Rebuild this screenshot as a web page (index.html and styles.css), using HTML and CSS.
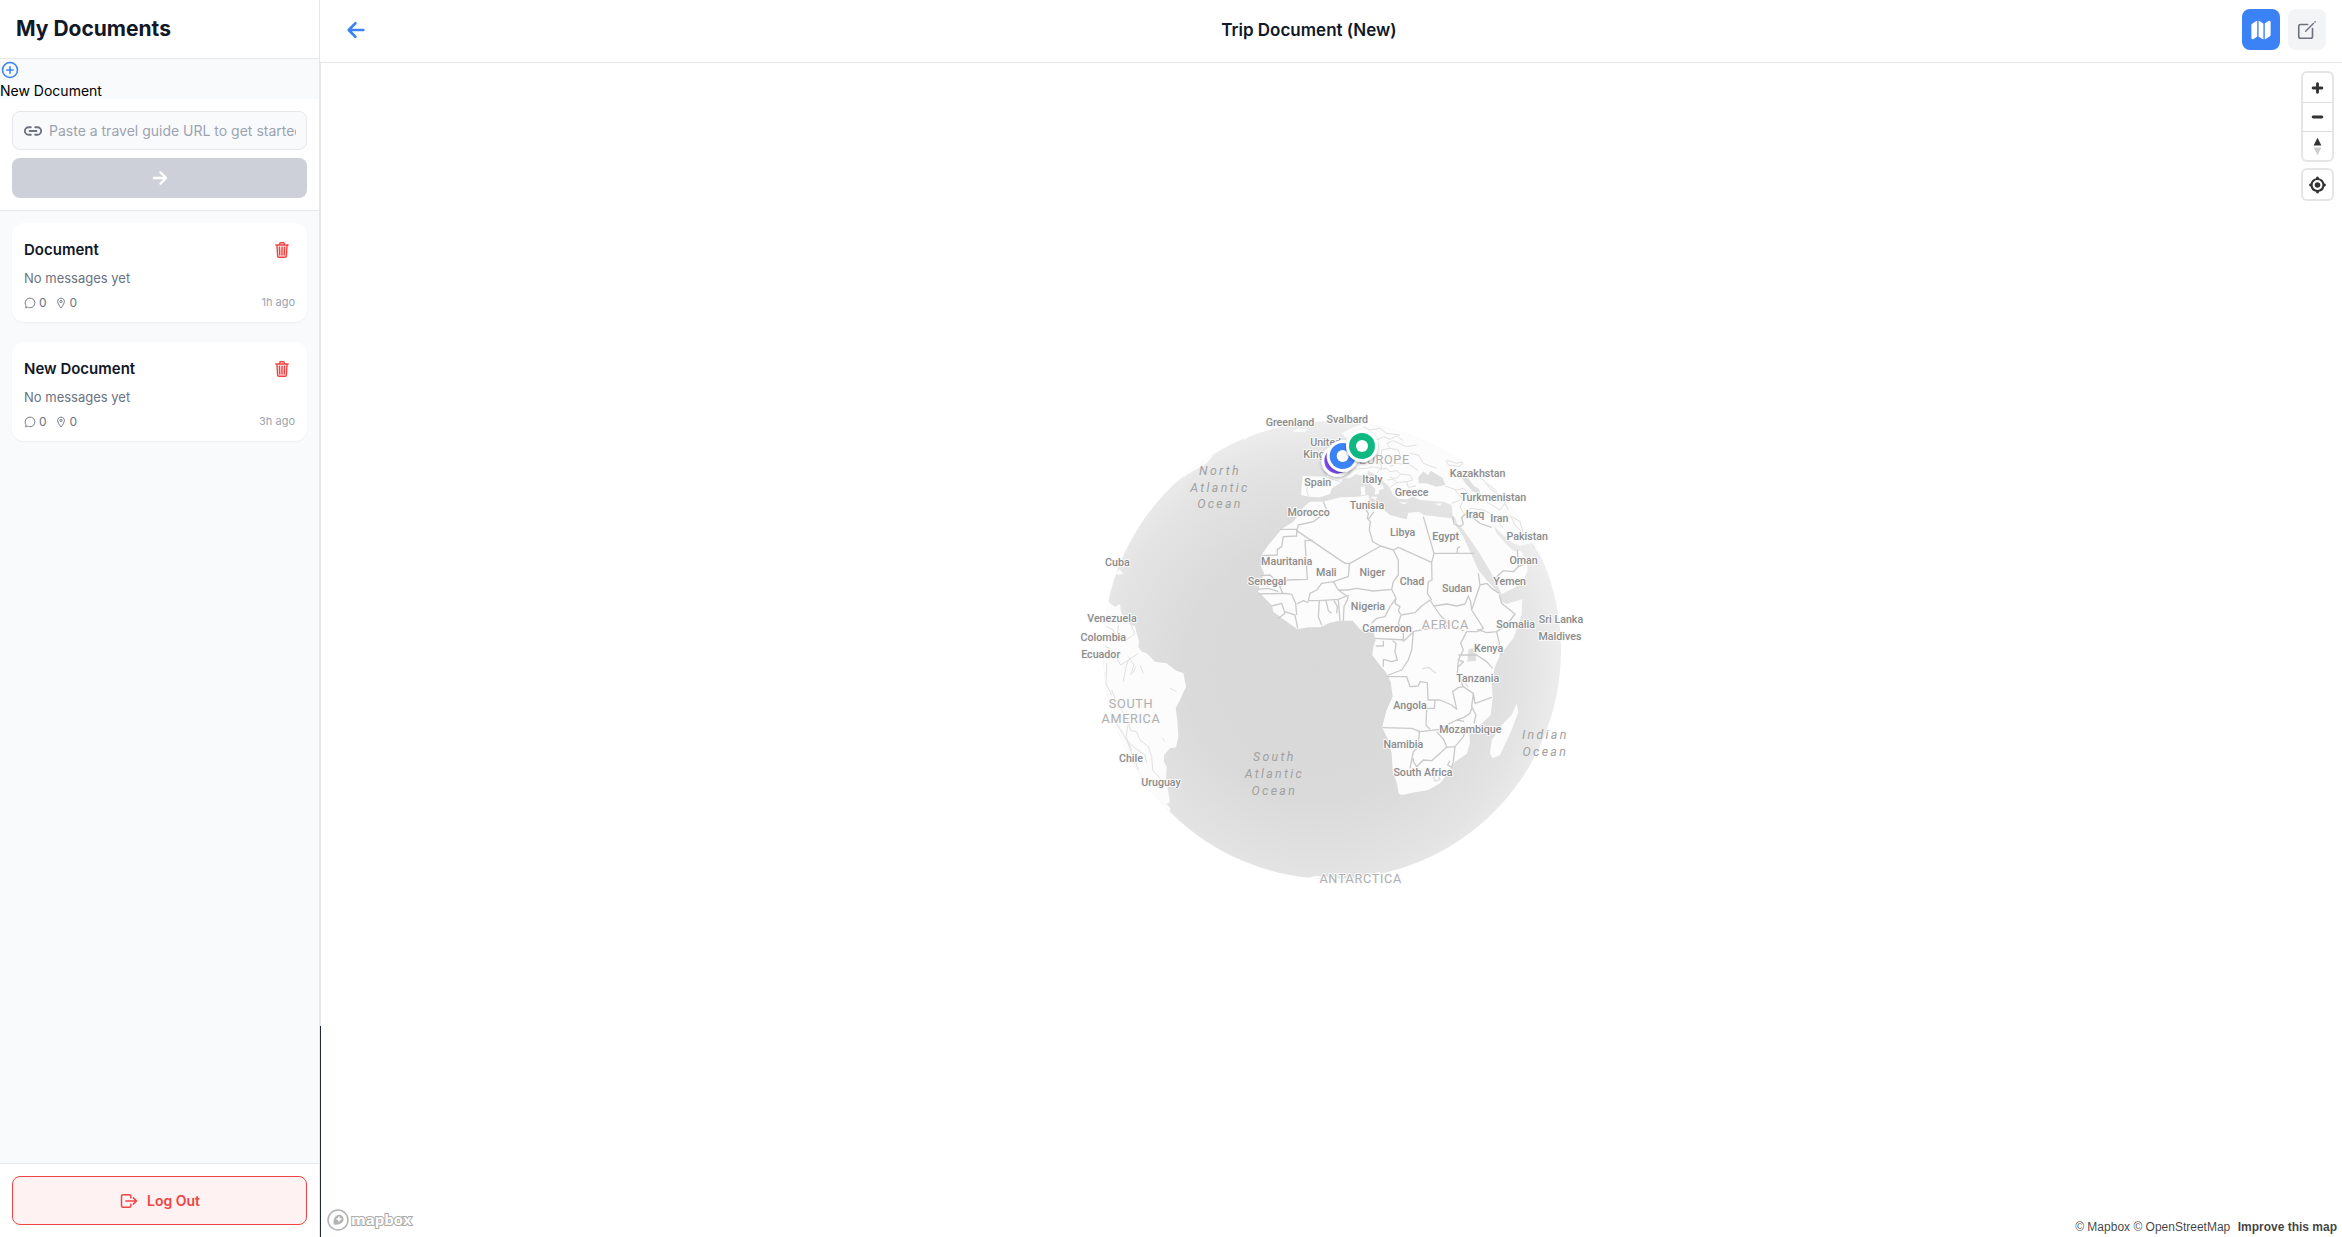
FILE: index.html
```html
<!DOCTYPE html>
<html lang="en">
<head>
<meta charset="utf-8">
<meta name="viewport" content="width=device-width, initial-scale=1">
<title>Trip Document (New)</title>
<link rel="stylesheet" href="styles.css">
</head>
<body>
<svg class="sprite" aria-hidden="true">
  <symbol id="i-trash" viewBox="0 0 512 512"><path d="M112 112l20 320c.95 18.49 14.4 32 32 32h184c17.67 0 30.87-13.51 32-32l20-320z" fill="currentColor" fill-opacity=".12"/><path d="M112 112l20 320c.95 18.49 14.4 32 32 32h184c17.67 0 30.87-13.51 32-32l20-320M80 112h352M192 112V72a24 24 0 0124-24h80a24 24 0 0124 24v40M256 176v224M184 176l8 224M328 176l-8 224" fill="none" stroke="currentColor" stroke-width="40" stroke-linecap="round" stroke-linejoin="round"/></symbol>
  <symbol id="i-chat" viewBox="0 0 512 512"><path d="M87.49 380c1.19-4.38-1.44-10.47-3.95-14.86a44.86 44.86 0 00-2.54-3.8 199.81 199.81 0 01-33-110C47.65 139.09 140.73 48 255.83 48 356.21 48 440 117.54 459.58 209.85a199 199 0 014.42 41.64c0 112.41-89.49 204.93-204.59 204.93-18.3 0-43-4.6-56.47-8.37s-26.92-8.77-30.39-10.11a31.09 31.09 0 00-11.12-2.07 30.71 30.71 0 00-12.09 2.43l-67.83 24.48a16 16 0 01-4.67 1.22 9.6 9.6 0 01-9.57-9.74 15.85 15.85 0 01.6-3.29z" fill="none" stroke="currentColor" stroke-width="40"/></symbol>
  <symbol id="i-pin" viewBox="0 0 512 512"><path d="M256 48c-79.5 0-144 61.39-144 137 0 87 96 224.87 131.25 272.49a15.77 15.77 0 0025.5 0C304 409.89 400 272.07 400 185c0-75.61-64.5-137-144-137z" fill="none" stroke="currentColor" stroke-width="40"/><circle cx="256" cy="192" r="48" fill="none" stroke="currentColor" stroke-width="40"/></symbol>
</svg>

<div class="app">
  <aside class="sidebar">
    <header class="sidebar-header"><h1>My Documents</h1></header>
    <button class="new-doc" type="button">
      <svg class="icon-20" viewBox="0 0 512 512"><path d="M448 256c0-106-86-192-192-192S64 150 64 256s86 192 192 192 192-86 192-192zM256 176v160M336 256H176" fill="none" stroke="currentColor" stroke-width="40" stroke-linecap="round"/></svg>
      <span>New Document</span>
    </button>
    <form class="url-form">
      <label class="url-field">
        <svg class="icon-20" viewBox="0 0 512 512" role="img" aria-label="Travel guide URL"><path d="M200.66 352H144a96 96 0 010-192h55.41M312.59 160H368a96 96 0 010 192h-56.66M169.07 256h175.86" fill="none" stroke="currentColor" stroke-width="48" stroke-linecap="round"/></svg>
        <input type="text" placeholder="Paste a travel guide URL to get started">
      </label>
      <button class="url-submit" type="button" aria-label="Start">
        <svg class="icon-20" viewBox="0 0 512 512"><path d="M268 112l144 144-144 144M392 256H100" fill="none" stroke="currentColor" stroke-width="60" stroke-linecap="round" stroke-linejoin="round"/></svg>
      </button>
    </form>

    <div class="doc-list">
      <article class="doc-card">
        <div class="doc-top"><h2>Document</h2><button class="doc-delete" type="button" aria-label="Delete Document"><svg class="icon-18"><use href="#i-trash"/></svg></button></div>
        <p>No messages yet</p>
        <div class="doc-meta">
          <span><svg class="icon-12"><use href="#i-chat"/></svg>0</span>
          <span><svg class="icon-12"><use href="#i-pin"/></svg>0</span>
          <time>1h ago</time>
        </div>
      </article>
      <article class="doc-card">
        <div class="doc-top"><h2>New Document</h2><button class="doc-delete" type="button" aria-label="Delete New Document"><svg class="icon-18"><use href="#i-trash"/></svg></button></div>
        <p>No messages yet</p>
        <div class="doc-meta">
          <span><svg class="icon-12"><use href="#i-chat"/></svg>0</span>
          <span><svg class="icon-12"><use href="#i-pin"/></svg>0</span>
          <time>3h ago</time>
        </div>
      </article>
    </div>

    <footer class="sidebar-footer">
      <button class="logout" type="button">
        <svg class="icon-20" viewBox="0 0 512 512"><path d="M304 336v40a40 40 0 01-40 40H104a40 40 0 01-40-40V136a40 40 0 0140-40h152c22.09 0 48 17.91 48 40v40M368 336l80-80-80-80M176 256h256" fill="none" stroke="currentColor" stroke-width="38" stroke-linecap="round" stroke-linejoin="round"/></svg>
        Log Out
      </button>
    </footer>
  </aside>

  <main class="main">
    <header class="topbar">
      <button class="back" type="button" aria-label="Back"><svg class="icon-24" viewBox="0 0 512 512"><path d="M244 400L100 256l144-144M120 256h292" fill="none" stroke="currentColor" stroke-width="56" stroke-linecap="round" stroke-linejoin="round"/></svg></button>
      <h2>Trip Document (New)</h2>
      <div class="view-switch">
        <button class="view active" type="button" aria-label="Map view"><svg class="icon-22" viewBox="0 0 512 512"><path fill="currentColor" d="M48.17 113.34A32 32 0 0032 141.24V438a32 32 0 0047 28.37c.43-.23.85-.47 1.26-.74l84.14-55.05a8 8 0 003.63-6.72V46.45a8 8 0 00-12.51-6.63zM212.36 39.31A8 8 0 00200 46v357.56a8 8 0 003.63 6.72l96 62.42A8 8 0 00312 466V108.67a8 8 0 00-3.64-6.73zM464.53 46.47a31.64 31.64 0 00-31.5-.88 12.07 12.07 0 00-1.25.74l-84.15 55a8 8 0 00-3.63 6.72v357.46a8 8 0 0012.52 6.63l107.07-73.46a32 32 0 0016.41-28v-296a32.76 32.76 0 00-15.47-28.21z"/></svg></button>
        <button class="view" type="button" aria-label="Edit view"><svg class="icon-22" viewBox="0 0 512 512"><path d="M384 224v184a40 40 0 01-40 40H104a40 40 0 01-40-40V168a40 40 0 0140-40h167.48" fill="none" stroke="currentColor" stroke-width="38" stroke-linecap="round" stroke-linejoin="round"/><path fill="currentColor" d="M459.94 53.25a16.06 16.06 0 00-23.22-.56L424.35 65a8 8 0 000 11.31l11.34 11.32a8 8 0 0011.34 0l12.06-12c6.1-6.09 6.67-16.01.85-22.38zM399.34 90L218.82 270.2a9 9 0 00-2.31 3.93L208.16 299a3.91 3.91 0 004.86 4.86l24.85-8.35a9 9 0 003.93-2.31L422 112.66a9 9 0 000-12.66l-9.95-10a9 9 0 00-12.71 0z"/></svg></button>
      </div>
    </header>

    <section class="map" aria-label="Map">
      <svg class="globe" viewBox="36 30 1560 1440">
        <defs>
          <radialGradient id="ocean" gradientUnits="userSpaceOnUse" cx="770" cy="810" r="790">
            <stop offset="0" stop-color="#d8d8d8"/><stop offset=".5" stop-color="#dadada"/><stop offset=".8" stop-color="#e4e4e4"/><stop offset="1" stop-color="#f1f1f1"/>
          </radialGradient>
          <clipPath id="disc"><circle cx="816" cy="750" r="687"/></clipPath>
          <filter id="shadow" x="-30%" y="-30%" width="160%" height="160%"><feDropShadow dx="0" dy="5" stdDeviation="5" flood-opacity=".3"/></filter>
        </defs>
        <circle cx="816" cy="750" r="687" fill="url(#ocean)"/>
        <g clip-path="url(#disc)">
          <g class="land">
            <path d="M753 305L745 308 728 325 712 350 700 365 665 387 645 412 625 435 605 465 603 500 612 520 600 548 595 575 610 590 635 615 640 635 660 650 690 672 712 688 745 682 780 682 810 668 840 662 878 662 900 688 940 695 947 720 940 740 937 765 955 790 980 820 992 845 998 890 980 930 968 975 967 983 982 1015 995 1060 998 1110 1012 1155 1016 1180 1025 1185 1065 1177 1105 1170 1140 1150 1165 1120 1185 1085 1220 1062 1230 1030 1228 1000 1260 975 1292 945 1298 895 1295 840 1305 800 1320 765 1360 715 1385 645 1387 598 1340 612 1325 605 1318 580 1280 540 1255 510 1235 465 1210 410 1190 380 1175 355 1150 352 1090 345 1078 335 1045 338 1040 358 1025 355 990 345 965 325 940 325 930 305 925 285 895 290 840 292 790 305Z"/>
            <path transform="translate(510 0)" d="M218 228L290 230 296 205 285 188 320 165 345 140 350 115 335 100 370 82 400 70 440 20 1100 60 1060 400 940 480 905 430 870 437 850 430 815 402 790 376 800 400 828 432 850 452 872 452 890 480 893 510 880 545 850 565 815 582 805 560 780 512 750 462 720 418 697 385 684 378 676 355 668 345 665 315 640 305 610 303 570 300 550 290 530 298 505 296 490 285 478 262 455 238 432 222 414 212 412 224 432 238 458 256 462 266 448 270 446 282 434 284 436 266 418 250 398 228 378 222 360 234 340 236 330 250 306 264 300 282 270 292 236 290 213 285Z"/>
            <path transform="translate(510 0)" d="M290 160L300 130 318 125 322 160 340 178 300 182ZM392 262L404 258 406 284 394 286ZM420 290L442 290 436 300ZM508 306L535 308 520 313ZM615 311L635 310 630 318Z"/>
            <path d="M150 610L165 620 180 612 183 635 200 665 225 680 237 725 235 740 245 755 260 760 285 785 320 790 345 810 370 820 378 860 360 900 347 925 352 960 355 1010 348 1042 330 1045 312 1065 312 1085 320 1100 318 1140 325 1175 330 1205 320 1212 332 1226 300 1290 60 1200 60 610 140 595Z"/>
            <path d="M1370 910L1375 935 1355 990 1320 1065 1298 1075 1290 1060 1295 1020 1330 970 1355 945Z"/>
            <path d="M697 92L715 85 742 88 735 95 705 97ZM555 122L565 108 600 98 625 80 540 90ZM345 248L385 222 440 190 462 162 400 170 320 240ZM165 520L180 508 190 522 175 524ZM700 1440L770 1428 860 1438 960 1415 960 1450H700Z"/>
          </g>
          <g class="water">
            <path d="M1075 232L1090 214 1104 226 1112 212 1148 234 1156 254 1130 260 1098 250 1076 250ZM1200 225L1222 232 1242 258 1258 268 1262 285 1238 274 1216 250ZM1225 748L1250 742 1248 782 1222 785ZM880 122L900 108 920 112 905 150 888 150Z"/>
          </g>
          <g class="borders" transform="translate(510 0)">
            <path d="M280 305L292 335 270 350 250 365 205 375 200 395M150 388H200V408L160 410 155 440 142 448V465L95 467M200 392L345 490H360L452 438 428 425 418 390 421 365 412 355 415 340 395 310M415 358L432 335M248 420L225 422 232 538 170 540 150 560M92 527L120 525 145 550 158 580M85 568L115 565 145 575M85 582L165 580 185 583 197 610M358 492L355 530 310 545 275 550 260 570 240 580 235 602 265 602 325 598 350 588 325 570 310 545M325 570L355 570 380 565 430 573 485 568 490 545 505 525V480L490 450 452 438M490 450L505 442 605 487 612 460 580 350M612 460H732M682 460V445L690 440M605 487L606 540 595 545 592 580 605 600M355 585L352 600 342 620 340 662M485 568L498 595 480 620 465 650 440 655 425 670M498 595L495 610 510 620 505 632 512 643M125 618L155 610 165 640 145 655M165 635L195 645 203 685M200 612L220 602 235 608M197 610L200 645M268 602L265 650 275 675M288 602L295 632 305 640M312 602L322 620 320 640M325 600L330 662M668 350L672 372 690 380 700 372 695 352 710 340 750 370 785 382M800 530L820 512 850 515 865 500 890 490M865 500L862 450"/>
          </g>
          <g class="borders" transform="translate(840 480)">
            <path d="M183 165L225 158 245 138 270 120 282 138 300 165 330 195 370 212M175 190L183 165M282 138L320 132 350 138 375 132 385 108 392 125 395 150M415 40L420 75 410 105 395 150 405 165 430 205 412 215 380 215M420 75L440 70 455 85 478 100M478 105L485 130 525 162 500 195 470 215 440 218 412 208M470 215L478 250 475 270 485 285M175 190L190 220V245M105 235L195 240 220 215 250 208 300 205 330 195M220 215L215 270 205 300 185 330 145 345M130 242V258H107M158 242L168 250 165 275 172 300 155 305 130 298V320M140 350H200L210 380 235 378 240 365 262 368 264 420 285 420 283 445 260 445 258 495 270 508M285 420L300 420 335 435 350 448 345 425 338 395 355 383 370 380M380 215L362 250 370 270 355 300 352 340 370 380 400 400 405 430 455 412M355 285H410L440 305 458 325M355 300L370 305 355 320M400 400L395 440 408 465 402 490M350 480L372 472 390 460 395 445M128 503L215 505 240 515 300 508 330 490 350 480 372 484"/>
          </g>
          <g class="borders" transform="translate(720 690)">
            <path d="M358 303L355 350 340 365 330 415M340 385V395L350 410 370 390 395 392 440 352 465 350 460 395M410 305L432 330 440 352M465 350L490 320 500 290M450 392L443 405 455 412 460 395"/>
            <path class="faint" d="M400 440L415 434 420 448 406 454ZM368 116L385 112 408 130M495 160L505 172"/>
          </g>
          <g class="borders thin">
            <path transform="translate(510 0)" d="M235 290L230 270 236 250M290 232L330 245M380 210L370 195 385 185M385 206L410 205 430 200 455 206M440 220L450 208 470 205 480 215M455 206L452 190 430 180M480 215L500 212 512 222 500 235 480 232M470 240L490 238 500 248 480 262M500 248L530 245 548 240 540 225 512 222M530 245L535 262 558 258M480 200L500 190 540 195 565 212M452 175L455 150 480 145 505 150 510 165M440 120L460 110 480 118 500 108 520 122M400 80L420 90 450 85 470 100 510 105M480 145L470 130 490 122 530 140 560 135M540 160L565 165 580 190 620 205M650 180L680 190 700 185 690 200 655 195 648 182M645 258L680 270 700 265 720 285M675 270L700 300 690 320 700 340M665 310L690 300M700 345L720 325 760 330M735 290L760 300 810 330 825 310 815 290 780 265 760 240 720 215 700 220M770 250L810 280 835 330M760 330L790 345 820 385M840 345L855 375 880 400M845 350L870 365 880 400 900 420M905 430L915 445"/>
            <path transform="translate(0 720)" d="M205 50L222 75 212 105M190 125L198 80 205 60M240 75L250 100M228 80L218 100M135 20L150 25 170 55 182 75 205 60 235 40M210 -50L225 -20 200 0 172 -10 175 -45M140 -40L160 -30 165 0M140 70L138 130 155 165M155 150L165 175 205 245 212 272 230 275 240 300 265 320 275 350 278 390 300 415M200 300L220 320 255 345 260 370M205 250L198 290 215 330M330 145L350 155M308 295L314 305M170 250L200 300 235 390"/>
            <path d="M612 380L622 383M640 384L650 386M495 522L505 524M520 533L526 535M430 1315L436 1318"/>
          </g>
        </g>

        <g class="label">
          <text x="690" y="79">Greenland</text><text x="862" y="69">Svalbard</text>
          <text x="797" y="138">United</text><text x="794" y="174">Kingdom</text>
          <text x="773" y="258">Spain</text><text x="937" y="248">Italy</text><text x="1055" y="288">Greece</text>
          <text x="921" y="328">Tunisia</text><text x="746" y="347">Morocco</text><text x="1028" y="409">Libya</text>
          <text x="1157" y="419">Egypt</text><text x="1245" y="353">Iraq</text><text x="1318" y="365">Iran</text>
          <text x="1253" y="230">Kazakhstan</text><text x="1300" y="303">Turkmenistan</text><text x="1402" y="421">Pakistan</text>
          <text x="1391" y="492">Oman</text><text x="1349" y="555">Yemen</text><text x="680" y="496">Mauritania</text>
          <text x="799" y="527">Mali</text><text x="937" y="527">Niger</text><text x="1056" y="554">Chad</text>
          <text x="1191" y="576">Sudan</text><text x="621" y="556">Senegal</text><text x="924" y="631">Nigeria</text>
          <text x="981" y="695">Cameroon</text><text x="1367" y="685">Somalia</text><text x="1503" y="668">Sri Lanka</text>
          <text x="1500" y="720">Maldives</text><text x="172" y="498">Cuba</text><text x="156" y="666">Venezuela</text>
          <text x="130" y="723">Colombia</text><text x="122" y="775">Ecuador</text><text x="213" y="1085">Chile</text>
          <text x="303" y="1159">Uruguay</text><text x="1286" y="755">Kenya</text><text x="1253" y="847">Tanzania</text>
          <text x="1050" y="926">Angola</text><text x="1231" y="1000">Mozambique</text><text x="1030" y="1044">Namibia</text>
          <text x="1089" y="1128">South Africa</text>
        </g>
        <g class="label continent">
          <text x="973" y="192">EUROPE</text><text x="1156" y="687">AFRICA</text>
          <text x="213" y="925">SOUTH</text><text x="213" y="968">AMERICA</text><text x="902" y="1449">ANTARCTICA</text>
        </g>
        <g class="label sea">
          <text x="480" y="225">North</text><text x="480" y="276">Atlantic</text><text x="480" y="325">Ocean</text>
          <text x="643" y="1083">South</text><text x="643" y="1134">Atlantic</text><text x="643" y="1186">Ocean</text>
          <text x="1456" y="1017">Indian</text><text x="1456" y="1067">Ocean</text>
        </g>
        <g class="markers">
          <g filter="url(#shadow)"><circle cx="832" cy="182" r="48"/><circle cx="832" cy="182" r="39" fill="#7c4df0"/><circle cx="832" cy="182" r="18"/></g>
          <g filter="url(#shadow)"><circle cx="848" cy="168" r="48"/><circle cx="848" cy="168" r="39" fill="#3b82f6"/><circle cx="848" cy="168" r="18"/></g>
          <g filter="url(#shadow)"><circle cx="906" cy="138" r="48"/><circle cx="906" cy="138" r="39" fill="#10b981"/><circle cx="906" cy="138" r="18"/></g>
        </g>
      </svg>

      <div class="map-controls">
        <div class="control-group">
          <button type="button" aria-label="Zoom in"><svg viewBox="0 0 29 29"><path d="M14.5 8.5c-.75 0-1.5.75-1.5 1.5v3h-3c-.75 0-1.5.75-1.5 1.5S9.25 16 10 16h3v3c0 .75.75 1.5 1.5 1.5S16 19.75 16 19v-3h3c.75 0 1.5-.75 1.5-1.5S19.75 13 19 13h-3v-3c0-.75-.75-1.5-1.5-1.5z"/></svg></button>
          <button type="button" aria-label="Zoom out"><svg viewBox="0 0 29 29"><path d="M10 13c-.75 0-1.5.75-1.5 1.5S9.25 16 10 16h9c.75 0 1.5-.75 1.5-1.5S19.75 13 19 13h-9z"/></svg></button>
          <button type="button" aria-label="Reset bearing to north"><svg viewBox="0 0 29 29"><path d="M10.5 14l4-8 4 8h-8z"/><path fill="#ccc" d="M10.5 16l4 8 4-8h-8z"/></svg></button>
        </div>
        <div class="control-group">
          <button type="button" aria-label="Find my location"><svg viewBox="0 0 20 20"><path fill-rule="evenodd" d="M10 4C9 4 9 5 9 5v.1A5 5 0 0 0 5.1 9H5s-1 0-1 1 1 1 1 1h.1A5 5 0 0 0 9 14.9v.1s0 1 1 1 1-1 1-1v-.1a5 5 0 0 0 3.9-3.9h.1s1 0 1-1-1-1-1-1h-.1A5 5 0 0 0 11 5.1V5s0-1-1-1zm0 2.5a3.5 3.5 0 1 1 0 7 3.5 3.5 0 1 1 0-7z"/><circle cx="10" cy="10" r="2"/></svg></button>
        </div>
      </div>

      <a class="mapbox-logo" href="#" aria-label="Mapbox homepage">
        <svg viewBox="0 0 88 23">
          <circle cx="11" cy="11" r="10" fill="#fff" stroke="#b3b3b3" stroke-width="1.5"/>
          <path fill="#b3b3b3" fill-rule="evenodd" d="M6.6 15.6C6 11.6 7 8.500 9.300 6.800 11.500 5.200 14.300 5.600 15.700 7.400c1.500 2 1 4.800-.9 6.400-2 1.700-4.700 2.200-8.200 1.800zM12 6.800l-1 2.300-2.300 1 2.300 1 1 2.300 1-2.300 2.300-1-2.300-1z"/>
          <text x="24" y="16">mapbox</text>
        </svg>
      </a>

      <div class="attribution"><a href="#">© Mapbox</a> <a href="#">© OpenStreetMap</a> <a class="improve" href="#">Improve this map</a></div>
    </section>
  </main>
</div>
</body>
</html>
```
FILE: styles.css
```css
* { box-sizing: border-box; }

body {
  margin: 0;
  font-family: Inter, "Liberation Sans", sans-serif;
  color: #111827;
  background: #fff;
}

h1, h2, p { margin: 0; }

button {
  margin: 0;
  padding: 0;
  border: 0;
  background: none;
  font: inherit;
  color: inherit;
  cursor: pointer;
}

svg { display: block; flex: none; }
.sprite { position: absolute; width: 0; height: 0; }
.icon-12 { width: 12px; height: 12px; }
.icon-18 { width: 18px; height: 18px; }
.icon-20 { width: 20px; height: 20px; }
.icon-22 { width: 22px; height: 22px; }
.icon-24 { width: 24px; height: 24px; }

.app {
  display: grid;
  grid-template-columns: 320px 1fr;
  min-height: 100vh;
}

/* Sidebar */
.sidebar {
  display: flex;
  flex-direction: column;
  background: #f9fafb;
  border-right: 1px solid #e5e7eb;
}

.sidebar-header {
  padding: 14px 16px;
  background: #fff;
  border-bottom: 1px solid #e5e7eb;
}
.sidebar-header h1 { font-size: 21px; line-height: 30px; font-weight: 700; }

.new-doc {
  display: flex;
  flex-direction: column;
  align-items: flex-start;
  gap: 2px;
  padding-top: 1px;
  font-size: 14px;
  line-height: 17px;
  color: #000;
}
.new-doc svg { color: #3b82f6; }

.url-form {
  display: flex;
  flex-direction: column;
  gap: 8px;
  padding: 12px;
  background: #fff;
  border-bottom: 1px solid #e5e7eb;
}
.url-field {
  display: flex;
  align-items: center;
  gap: 6px;
  height: 39px;
  padding: 0 10px;
  border: 1px solid #e5e7eb;
  border-radius: 8px;
  background: #f9fafb;
  color: #6b7280;
}
.url-field input {
  flex: 1;
  min-width: 0;
  padding: 0;
  border: 0;
  outline: 0;
  background: none;
  font: inherit;
  font-size: 14px;
}
.url-field input::placeholder { color: #9ca3af; }
.url-submit {
  display: grid;
  place-items: center;
  height: 40px;
  border-radius: 8px;
  background: #cdd0d8;
  color: #fff;
}

.doc-list {
  display: flex;
  flex: 1;
  flex-direction: column;
  gap: 20px;
  padding: 12px;
}
.doc-card {
  padding: 13px 12px 11px;
  border-radius: 12px;
  background: #fff;
  box-shadow: 0 1px 2px rgba(0, 0, 0, .05);
}
.doc-top { display: flex; align-items: center; justify-content: space-between; }
.doc-top h2 { font-size: 15px; line-height: 28px; font-weight: 600; }
.doc-delete { padding: 4px; color: #ef4444; }
.doc-card p { padding-top: 5px; font-size: 13px; line-height: 18px; color: #6b7280; }
.doc-meta {
  display: flex;
  align-items: center;
  gap: 8px;
  padding-top: 7px;
  font-size: 12px;
  line-height: 17px;
  color: #6b7280;
}
.doc-meta span { display: flex; align-items: center; gap: 3px; }
.doc-meta time { margin-left: auto; font-size: 11px; color: #9ca3af; }

.sidebar-footer { padding: 12px; background: #fff; border-top: 1px solid #e5e7eb; }
.logout {
  display: flex;
  align-items: center;
  justify-content: center;
  gap: 8px;
  width: 100%;
  height: 49px;
  border: 1px solid #ef4444;
  border-radius: 8px;
  background: #fef2f2;
  color: #ef4444;
  font-size: 14px;
  font-weight: 600;
}

/* Main column */
.main { display: flex; flex-direction: column; min-width: 0; }
.topbar {
  display: flex;
  align-items: center;
  height: 63px;
  padding: 0 16px 3px;
  border-bottom: 1px solid #e5e7eb;
}
.topbar h2 {
  flex: 1;
  font-size: 17px;
  line-height: 24px;
  font-weight: 600;
  text-align: center;
}
.back { padding: 8px; color: #3b82f6; }
.view-switch { display: flex; gap: 8px; }
.view {
  display: grid;
  place-items: center;
  width: 38px;
  height: 41px;
  border-radius: 8px;
  background: #f3f4f6;
  color: #6b7280;
}
.view.active { background: #3b82f6; color: #fff; }

.map {
  position: relative;
  display: grid;
  flex: 1;
  place-items: center;
  padding-left: 1px;
  background: linear-gradient(#e5e7eb 82%, #1f2937 82%) left / 1px 100% no-repeat;
}

/* Globe artwork: one pixel is three drawing units */
.globe { width: 520px; height: 480px; }
.land { fill: #fcfcfc; }
.water { fill: #dfdfdf; }
.borders { fill: none; stroke: #cacaca; stroke-width: 4; stroke-linejoin: round; }
.borders.thin { stroke: #e0e0e0; stroke-width: 3; }
.faint { stroke: #dedede; }
.label {
  font-family: Roboto, "Liberation Sans", sans-serif;
  font-size: 32px;
  font-weight: 500;
  fill: #8c8c8c;
  stroke: #fafafa;
  stroke-width: 6;
  stroke-linejoin: round;
  paint-order: stroke;
  text-anchor: middle;
}
.continent { font-size: 38px; letter-spacing: 2px; font-weight: 400; fill: #b0b0b0; }
.sea { font-size: 37px; font-style: italic; letter-spacing: 7px; font-weight: 400; fill: #a0a0a0; stroke: none; }
.markers { fill: #fff; }

.map-controls {
  position: absolute;
  top: 10px;
  right: 10px;
  display: flex;
  flex-direction: column;
  gap: 10px;
}
.control-group {
  display: flex;
  flex-direction: column;
  border-radius: 4px;
  background: #fff;
  box-shadow: 0 0 0 2px rgba(0, 0, 0, .1);
}
.control-group button { width: 29px; height: 29px; }
.control-group button + button { border-top: 1px solid #ddd; }
.control-group svg { width: 29px; height: 28px; fill: #333; }

.mapbox-logo { position: absolute; left: 7px; bottom: 5px; }
.mapbox-logo svg { width: 88px; height: 23px; overflow: visible; }
.mapbox-logo text {
  font-family: "Open Sans", sans-serif;
  font-size: 15px;
  font-weight: 700;
  fill: #fff;
  stroke: #aaa;
  stroke-width: 2;
  paint-order: stroke;
}

.attribution {
  position: absolute;
  right: 0;
  bottom: 0;
  padding: 0 5px;
  font: 12px/20px "Liberation Sans", Arial, sans-serif;
}
.attribution a { color: rgba(0, 0, 0, .75); text-decoration: none; }
.attribution .improve { margin-left: 4px; font-weight: 700; }
```
